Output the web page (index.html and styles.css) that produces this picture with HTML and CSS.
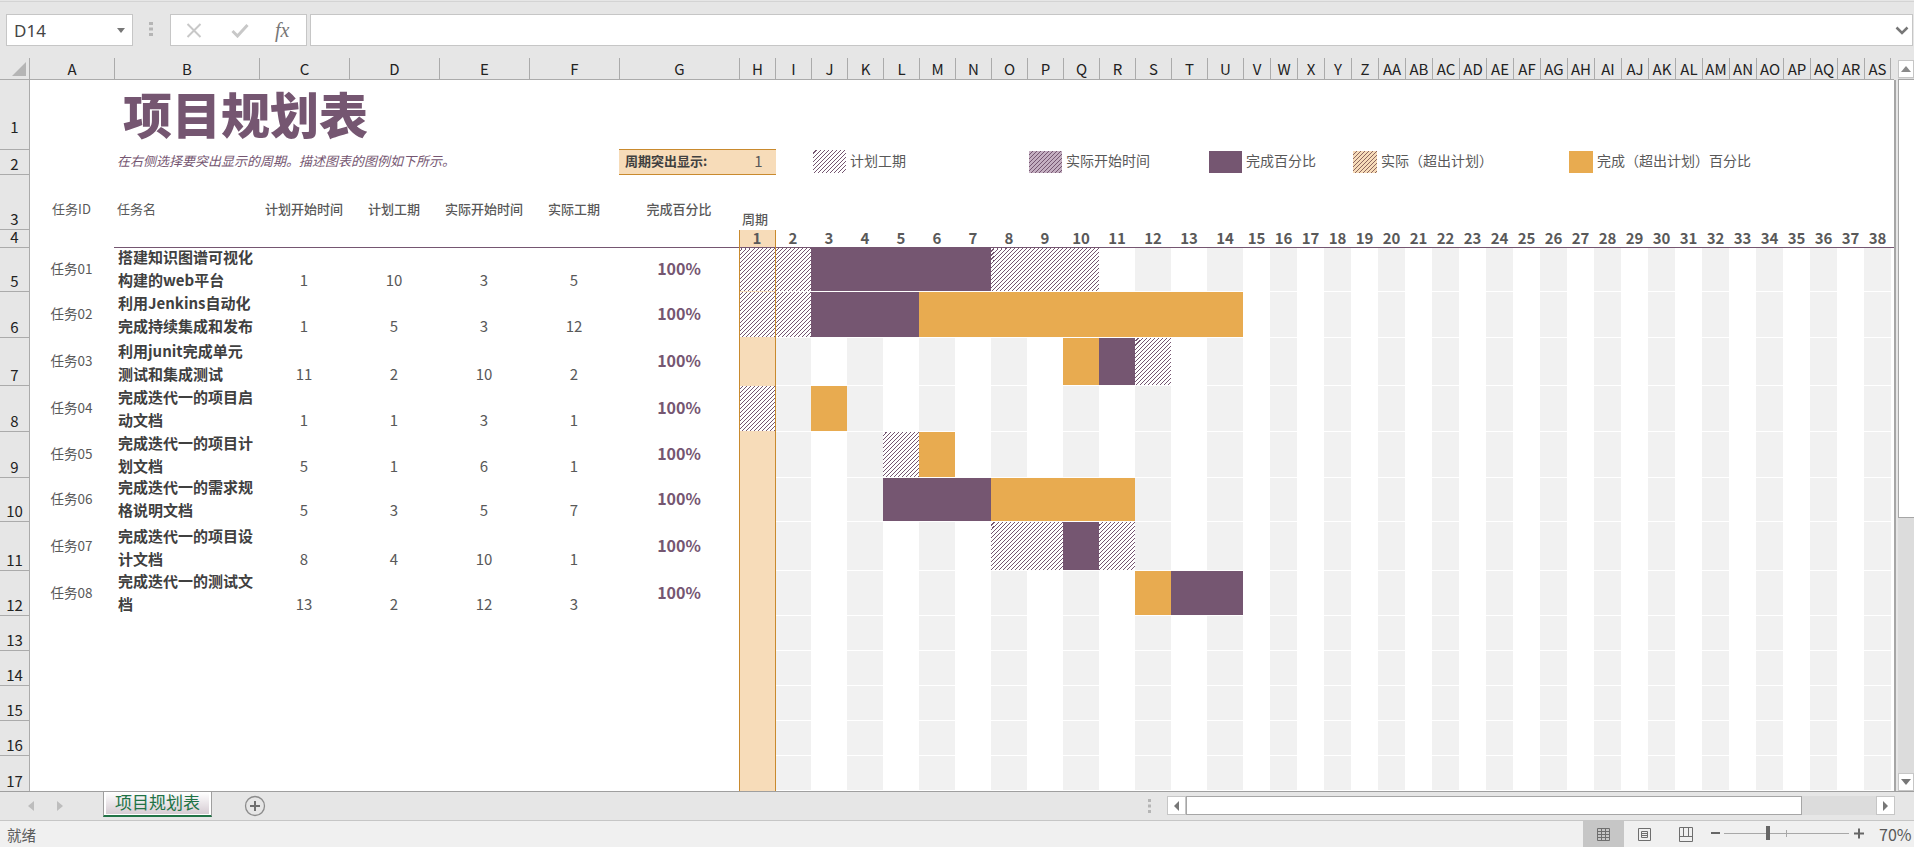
FILE: index.html
```html
<!DOCTYPE html>
<html lang="zh-CN">
<head>
<meta charset="utf-8">
<title>项目规划表</title>
<link rel="stylesheet" href="styles.css">
</head>
<body>
<div class="fbar">
  <div class="namebox"><span>D14</span><svg width="8" height="5" viewBox="0 0 8 5"><path d="M0 0h8L4 5z" fill="#777"/></svg></div>
  <svg class="grip" width="4" height="14" viewBox="0 0 4 14"><path d="M0 0h4v3H0zM0 5.500h4v3H0zM0 11h4v3H0z" fill="#b5b5b5"/></svg>
  <div class="fbtns">
    <svg width="16" height="15" viewBox="0 0 16 15"><path d="M1.500 1l13 13M14.500 1l-13 13" stroke="#c8c8c8" stroke-width="2" fill="none"/></svg>
    <svg width="18" height="15" viewBox="0 0 18 15"><path d="M1.500 8l5 5L16.500 2" stroke="#c8c8c8" stroke-width="3" fill="none"/></svg>
    <span class="fx">fx</span>
  </div>
  <div class="finput"><svg width="14" height="9" viewBox="0 0 14 9"><path d="M1.500 1.500L7 7l5.500-5.500" stroke="#777" stroke-width="2.500" fill="none"/></svg></div>
</div>

<div class="wrap">
  <div class="sheet">
    <div class="row head">
      <div class="corner"><svg width="29" height="21" viewBox="0 0 29 21"><path d="M12 18L26 4v14z" fill="#b5b5b5"/></svg></div>
      <div class="ch">A</div><div class="ch">B</div><div class="ch">C</div><div class="ch">D</div><div class="ch">E</div><div class="ch">F</div><div class="ch">G</div>
      <div class="tracks">
        <div class="ch">H</div><div class="ch">I</div><div class="ch">J</div><div class="ch">K</div><div class="ch">L</div><div class="ch">M</div><div class="ch">N</div><div class="ch">O</div><div class="ch">P</div><div class="ch">Q</div><div class="ch">R</div><div class="ch">S</div><div class="ch">T</div><div class="ch">U</div><div class="ch">V</div><div class="ch">W</div><div class="ch">X</div><div class="ch">Y</div><div class="ch">Z</div><div class="ch">AA</div><div class="ch">AB</div><div class="ch">AC</div><div class="ch">AD</div><div class="ch">AE</div><div class="ch">AF</div><div class="ch">AG</div><div class="ch">AH</div><div class="ch">AI</div><div class="ch">AJ</div><div class="ch">AK</div><div class="ch">AL</div><div class="ch">AM</div><div class="ch">AN</div><div class="ch">AO</div><div class="ch">AP</div><div class="ch">AQ</div><div class="ch">AR</div><div class="ch">AS</div>
      </div>
    </div>

    <div class="body">
      <div class="row h70"><div class="rh rh-first">1</div><h1 class="title">项目规划表</h1></div>

      <div class="row h25">
        <div class="rh">2</div>
        <p class="sub">在右侧选择要突出显示的周期。描述图表的图例如下所示。</p>
        <div class="legend">
          <div class="pick"><b>周期突出显示:</b><span>1</span></div>
          <div class="lg w216 first"><i class="sw sw-w33 hatch tall"></i>计划工期</div>
          <div class="lg w180"><i class="sw sw-w33 hatch-p"></i>实际开始时间</div>
          <div class="lg w144"><i class="sw sw-w33 purple"></i>完成百分比</div>
          <div class="lg w216"><i class="sw sw-w24 hatch-o"></i>实际（超出计划）</div>
          <div class="lg"><i class="sw sw-w24 orange"></i>完成（超出计划）百分比</div>
        </div>
      </div>

      <div class="row h55">
        <div class="rh">3</div>
        <div class="th thc thin">任务ID</div>
        <div class="th thl thin">任务名</div>
        <div class="th thc">计划开始时间</div>
        <div class="th thc">计划工期</div>
        <div class="th thc">实际开始时间</div>
        <div class="th thc">实际工期</div>
        <div class="th thc">完成百分比</div>
        <div class="period-label">周期</div>
      </div>

      <div class="row h18">
        <div class="rh">4</div>
        <div class="rule">
          <div class="tracks periods">
            <span class="on">1</span><span>2</span><span>3</span><span>4</span><span>5</span><span>6</span><span>7</span><span>8</span><span>9</span><span>10</span><span>11</span><span>12</span><span>13</span><span>14</span><span>15</span><span>16</span><span>17</span><span>18</span><span>19</span><span>20</span><span>21</span><span>22</span><span>23</span><span>24</span><span>25</span><span>26</span><span>27</span><span>28</span><span>29</span><span>30</span><span>31</span><span>32</span><span>33</span><span>34</span><span>35</span><span>36</span><span>37</span><span>38</span>
          </div>
        </div>
      </div>

      <div class="row h44"><div class="rh">5</div><div class="id">任务01</div><div class="nm">搭建知识图谱可视化<br>构建的web平台</div><div class="n">1</div><div class="n">10</div><div class="n">3</div><div class="n">5</div><div class="pct">100%</div>
        <div class="tracks g"><i class="hatch" style="grid-column:1/span 2"></i><i class="purple" style="grid-column:3/span 5"></i><i class="hatch" style="grid-column:8/span 3"></i></div></div>
      <div class="row h46"><div class="rh">6</div><div class="id">任务02</div><div class="nm">利用Jenkins自动化<br>完成持续集成和发布</div><div class="n">1</div><div class="n">5</div><div class="n">3</div><div class="n">12</div><div class="pct">100%</div>
        <div class="tracks g"><i class="hatch" style="grid-column:1/span 2"></i><i class="purple" style="grid-column:3/span 3"></i><i class="orange" style="grid-column:6/span 9"></i></div></div>
      <div class="row h48"><div class="rh">7</div><div class="id">任务03</div><div class="nm">利用junit完成单元<br>测试和集成测试</div><div class="n">11</div><div class="n">2</div><div class="n">10</div><div class="n">2</div><div class="pct">100%</div>
        <div class="tracks g"><i class="orange" style="grid-column:10/span 1"></i><i class="purple" style="grid-column:11/span 1"></i><i class="hatch" style="grid-column:12/span 1"></i></div></div>
      <div class="row h46"><div class="rh">8</div><div class="id">任务04</div><div class="nm">完成迭代一的项目启<br>动文档</div><div class="n">1</div><div class="n">1</div><div class="n">3</div><div class="n">1</div><div class="pct">100%</div>
        <div class="tracks g"><i class="hatch" style="grid-column:1/span 1"></i><i class="orange" style="grid-column:3/span 1"></i></div></div>
      <div class="row h46"><div class="rh">9</div><div class="id">任务05</div><div class="nm">完成迭代一的项目计<br>划文档</div><div class="n">5</div><div class="n">1</div><div class="n">6</div><div class="n">1</div><div class="pct">100%</div>
        <div class="tracks g"><i class="hatch" style="grid-column:5/span 1"></i><i class="orange" style="grid-column:6/span 1"></i></div></div>
      <div class="row h44"><div class="rh">10</div><div class="id">任务06</div><div class="nm">完成迭代一的需求规<br>格说明文档</div><div class="n">5</div><div class="n">3</div><div class="n">5</div><div class="n">7</div><div class="pct">100%</div>
        <div class="tracks g"><i class="purple" style="grid-column:5/span 3"></i><i class="orange" style="grid-column:8/span 4"></i></div></div>
      <div class="row h49"><div class="rh">11</div><div class="id">任务07</div><div class="nm">完成迭代一的项目设<br>计文档</div><div class="n">8</div><div class="n">4</div><div class="n">10</div><div class="n">1</div><div class="pct">100%</div>
        <div class="tracks g"><i class="hatch" style="grid-column:8/span 2"></i><i class="purple" style="grid-column:10/span 1"></i><i class="hatch" style="grid-column:11/span 1"></i></div></div>
      <div class="row h45"><div class="rh">12</div><div class="id">任务08</div><div class="nm">完成迭代一的测试文<br>档</div><div class="n">13</div><div class="n">2</div><div class="n">12</div><div class="n">3</div><div class="pct">100%</div>
        <div class="tracks g"><i class="orange" style="grid-column:12/span 1"></i><i class="purple" style="grid-column:13/span 2"></i></div></div>

      <div class="row h35"><div class="rh">13</div><div class="g g-empty"></div></div>
      <div class="row h35"><div class="rh">14</div><div class="g g-empty"></div></div>
      <div class="row h35"><div class="rh">15</div><div class="g g-empty"></div></div>
      <div class="row h35"><div class="rh">16</div><div class="g g-empty"></div></div>
      <div class="row h35"><div class="rh">17</div><div class="g g-empty"></div></div>

      <div class="hcol"></div>
    </div>
  </div>

  <div class="vscroll">
    <div class="vbtn"><svg width="10" height="6" viewBox="0 0 10 6"><path d="M5 0l5 6H0z" fill="#8a8a8a"/></svg></div>
    <div class="vthumb"></div>
    <div class="vtrack"></div>
    <div class="vbtn"><svg width="10" height="6" viewBox="0 0 10 6"><path d="M0 0h10L5 6z" fill="#777"/></svg></div>
  </div>
</div>

<div class="tabs">
  <div class="nav">
    <svg width="6" height="10" viewBox="0 0 6 10"><path d="M6 0v10L0 5z" fill="#bdbdbd"/></svg>
    <svg width="6" height="10" viewBox="0 0 6 10"><path d="M0 0v10l6-5z" fill="#bdbdbd"/></svg>
  </div>
  <div class="tab"><span>项目规划表</span></div>
  <svg class="add" width="22" height="22" viewBox="0 0 22 22"><circle cx="11" cy="11" r="9.500" fill="none" stroke="#8c8c8c" stroke-width="1.300"/><path d="M6 11h10M11 6v10" stroke="#6e6e6e" stroke-width="2" fill="none"/></svg>
  <div class="hscroll">
    <svg class="grip2" width="3" height="14" viewBox="0 0 3 14"><path d="M0 0h3v3H0zM0 5.500h3v3H0zM0 11h3v3H0z" fill="#b5b5b5"/></svg>
    <div class="hbtn"><svg width="5" height="10" viewBox="0 0 5 10"><path d="M5 0v10L0 5z" fill="#777"/></svg></div>
    <div class="hthumb"></div>
    <div class="htrack"></div>
    <div class="hbtn"><svg width="5" height="10" viewBox="0 0 5 10"><path d="M0 0v10l5-5z" fill="#777"/></svg></div>
  </div>
</div>

<div class="status">
  <span class="ready">就绪</span>
  <div class="sright">
    <div class="view active"><svg width="13" height="13" viewBox="0 0 13 13"><path d="M.5.500h12v12H.500zM4.500.5v12M8.500.5v12M.5 3.500h12M.5 6.500h12M.5 9.500h12" stroke="#6e6e6e" fill="none"/></svg></div>
    <div class="view"><svg width="13" height="13" viewBox="0 0 13 13"><path d="M.5.500h12v12H.500zM3.500 3.500h6v6h-6zM3.500 5.500h6M3.500 7.500h6" stroke="#6e6e6e" fill="none"/></svg></div>
    <div class="view"><svg width="14" height="15" viewBox="0 0 14 15"><path d="M.5.500h13v14H.500zM.5 9.500h13M4.500.5v9M9.500.5v9" stroke="#6e6e6e" fill="none"/></svg></div>
    <svg class="zoom" width="164" height="26" viewBox="0 0 164 26"><path d="M5 11h9v2H5z" fill="#666"/><path d="M18 12.500h125" stroke="#a8a8a8"/><path d="M80.500 9v7" stroke="#a8a8a8"/><path d="M60 5h4v14h-4z" fill="#666"/><path d="M148 12.500h10M153 7.500v10" stroke="#666" stroke-width="2" fill="none"/></svg>
    <span class="pctz">70%</span>
  </div>
</div>
</body>
</html>
```
FILE: styles.css
```css
* { box-sizing: border-box; }
html, body { margin: 0; padding: 0; }
body {
  width: 1914px;
  height: 847px;
  overflow: hidden;
  background: #e6e6e6;
  font-family: "Noto Sans CJK SC", "Noto Sans", sans-serif;
  color: #595959;
  display: flex;
  flex-direction: column;
}

/* formula bar */
.fbar {
  height: 58px;
  padding: 14px 1px 0 6px;
  display: flex;
  align-items: flex-start;
  background: linear-gradient(#d4d4d4, #d4d4d4) 0 1px / 100% 1px no-repeat;
}
.namebox, .fbtns, .finput {
  height: 32px;
  background: #fff;
  border: 1px solid #c6c6c6;
  display: flex;
  align-items: center;
}
.namebox {
  width: 127px;
  padding: 0 7px 0 7px;
  justify-content: space-between;
  font: 17px/1 "Noto Sans", sans-serif;
  color: #444;
}
.grip { margin: 8px 17px 0 16px; }
.fbtns {
  width: 137px;
  padding-left: 15px;
}
.fbtns svg:nth-child(2) { margin-left: 29px; }
.fx {
  margin-left: 26px;
  font: italic 20px/1 "Liberation Serif", serif;
  color: #777;
}
.finput {
  width: 1603px;
  margin-left: 3px;
  justify-content: flex-end;
  padding-right: 3px;
}

/* sheet */
.wrap { height: 733px; display: flex; }
.sheet { width: 1896px; display: flex; flex-direction: column; }
.row {
  display: grid;
  grid-template-columns: 29px 85px 145px 90px 90px 90px 90px 120px 1152px 3px;
  grid-template-rows: minmax(0, 1fr);
}
.head { height: 22px; width: 1894px; border-bottom: 1px solid #ababab; }
.corner { width: 29px; height: 21px; }
.ch {
  border-left: 1px solid #ababab;
  font-size: 15px;
  line-height: 21px;
  text-align: center;
  color: #222;
}
.tracks {
  display: grid;
  grid-template-columns: repeat(14, 36px) repeat(24, 27px);
  grid-template-rows: minmax(0, 1fr);
}
.head .tracks .ch:last-child { border-right: 1px solid #ababab; }

.body {
  position: relative;
  height: 711px;
  background: #fff;
  border-right: 2px solid #a6a6a6;
}
.h70 { height: 70px; } .h25 { height: 25px; } .h55 { height: 55px; } .h18 { height: 18px; }
.h44 { height: 44px; } .h46 { height: 46px; } .h48 { height: 48px; } .h49 { height: 49px; }
.h45 { height: 45px; } .h35 { height: 35px; }

.rh {
  width: 30px;
  background: #e6e6e6;
  border-right: 1px solid #ababab;
  border-bottom: 1px solid #ababab;
  display: flex;
  align-items: flex-end;
  justify-content: center;
  font-size: 15px;
  line-height: 20px;
  color: #222;
}
.rh-first { padding-bottom: 12px; }
.row:nth-last-child(2) .rh { border-bottom: 0; }

.title {
  grid-column: 2 / span 6;
  margin: 0;
  padding: 0 0 4px 94px;
  align-self: center;
  font-size: 49px;
  font-weight: 900;
  line-height: 60px;
  color: #755671;
  white-space: nowrap;
}
.sub {
  grid-column: 2 / span 6;
  margin: 0;
  padding: 0 0 4px 88px;
  align-self: center;
  font-size: 13px;
  font-style: italic;
  line-height: 20px;
  color: #755671;
  white-space: nowrap;
}
.legend {
  grid-column: 8 / -1;
  display: flex;
  align-items: flex-start;
}
.pick {
  width: 157px;
  height: 26px;
  margin-top: -1px;
  display: flex;
  align-items: center;
  padding: 0 0 3px 6px;
  background: #f7dcb9;
  border-top: 1px solid #c98a2e;
  border-bottom: 1px solid #c98a2e;
  font-size: 13px;
  color: #404040;
}
.pick b { flex: 1; font-weight: 700; }
.pick span { width: 35px; text-align: center; font-size: 15px; color: #595959; }
.lg {
  display: flex;
  align-items: flex-start;
  font-size: 14px;
  line-height: 20px;
  color: #595959;
  white-space: nowrap;
}
.lg.first { margin-left: 37px; }
.w216 { width: 216px; } .w180 { width: 180px; } .w144 { width: 144px; }
.sw { display: block; height: 22px; margin: 1px 4px 0 0; }
.sw.tall { height: 23px; margin-top: 0; }
.sw-w33 { width: 33px; }
.sw-w24 { width: 24px; }

.th {
  padding-top: 24px;
  font-size: 13px;
  font-weight: 500;
  line-height: 20px;
  color: #595959;
  white-space: nowrap;
}
.th.thin { font-weight: 400; }
.thc { text-align: center; }
.thl { padding-left: 3px; }
.period-label {
  align-self: end;
  padding: 0 0 1px 3px;
  font-size: 13px;
  font-weight: 500;
  line-height: 20px;
  color: #595959;
}
.rule {
  grid-column: 3 / -1;
  padding-left: 625px;
  border-bottom: 1px solid #755671;
}
.periods span {
  font-size: 15px;
  font-weight: 700;
  line-height: 16px;
  text-align: center;
  color: #595959;
  height: 17px;
}
.periods .on { background: #f7dcb9; }

.id, .pct { align-self: center; text-align: center; padding-bottom: 4px; }
.id { font-size: 13.500px; line-height: 20px; }
.nm {
  align-self: end;
  margin-bottom: 1px;
  padding-left: 4px;
  font-size: 15px;
  font-weight: 700;
  line-height: 23px;
  color: #404040;
  white-space: nowrap;
}
.n {
  align-self: end;
  margin-bottom: 1px;
  text-align: center;
  font-size: 15px;
  line-height: 23px;
}
.pct {
  font-size: 16px;
  font-weight: 700;
  line-height: 20px;
  color: #755671;
}

.g {
  grid-column: 9;
  background:
    linear-gradient(#f7dcb9, #f7dcb9) 0 0 / 36px 100% no-repeat,
    linear-gradient(#fff, #fff) 0 100% / 100% 1px no-repeat,
    repeating-linear-gradient(90deg, #fff 0 36px, #f1f1f1 36px 72px) 0 0 / 504px 100% no-repeat,
    repeating-linear-gradient(90deg, #fff 0 27px, #f1f1f1 27px 54px) 504px 0 / 648px 100% no-repeat;
}
.g-empty { grid-column: 9; }
.g i { grid-row: 1; display: block; margin-bottom: 1px; }

.purple { background: #755671; }
.orange { background: #e8ab50; }
.hatch { background: repeating-linear-gradient(135deg, #fff 0 2.12132px, #755671 2.12132px 2.82843px); }
.hatch-p { background: repeating-linear-gradient(135deg, #c4afc1 0 2.12132px, #755671 2.12132px 2.82843px); }
.hatch-o { background: repeating-linear-gradient(135deg, #f7dcb9 0 2.12132px, #8c6660 2.12132px 2.82843px); }

.hcol {
  position: absolute;
  left: 739px;
  top: 150px;
  bottom: 0;
  width: 37px;
  border-left: 1px solid #c98a2e;
  border-right: 1px solid #c98a2e;
}

/* vertical scrollbar */
.vscroll {
  width: 16px;
  margin: 2px 0 0 2px;
  display: flex;
  flex-direction: column;
  background: #dcdcdc;
}
.vbtn {
  height: 18px;
  flex: none;
  background: #fff;
  border: 1px solid #c6c6c6;
  display: flex;
  align-items: center;
  justify-content: center;
}
.vthumb {
  height: 439px;
  margin-top: 1px;
  background: #fff;
  border: 1px solid #a6a6a6;
  border-right: 0;
}
.vtrack { flex: 1; background: #dcdcdc; }

/* tabs */
.tabs {
  height: 29px;
  display: flex;
  align-items: flex-start;
  border-top: 1px solid #9f9f9f;
}
.nav {
  width: 103px;
  padding: 9px 0 0 28px;
  display: flex;
  gap: 23px;
}
.tab {
  width: 109px;
  height: 25px;
  border-left: 1px solid #9f9f9f;
  border-right: 1px solid #9f9f9f;
  border-bottom: 2px solid #217346;
  background: #fff;
  padding: 0 2px 1px;
}
.tab span {
  display: block;
  height: 22px;
  text-align: center;
  font-size: 17px;
  line-height: 20px;
  color: #217346;
  background: linear-gradient(#fff, #d6ccd3);
}
.add { margin: 3px 0 0 32px; }
.hscroll {
  margin: 4px 19px 0 auto;
  height: 19px;
  display: flex;
  align-items: center;
}
.grip2 { margin-right: 16px; }
.hbtn {
  width: 19px;
  height: 19px;
  background: #fff;
  border: 1px solid #c6c6c6;
  display: flex;
  align-items: center;
  justify-content: center;
}
.hthumb {
  width: 616px;
  height: 19px;
  background: #fff;
  border: 1px solid #a6a6a6;
}
.htrack { width: 74px; height: 19px; background: #dcdcdc; }

/* status bar */
.status {
  height: 27px;
  flex: none;
  display: flex;
  align-items: center;
  background: #f0f0f0;
  border-top: 1px solid #c6c6c6;
}
.ready { margin-left: 7px; font-size: 14.500px; color: #595959; }
.sright { margin-left: auto; height: 26px; display: flex; align-items: center; }
.view {
  width: 41px;
  height: 26px;
  display: flex;
  align-items: center;
  justify-content: center;
}
.view.active { background: #c6c6c6; }
.pctz { margin-left: 9px; width: 35px; font-size: 16px; color: #595959; }
```
